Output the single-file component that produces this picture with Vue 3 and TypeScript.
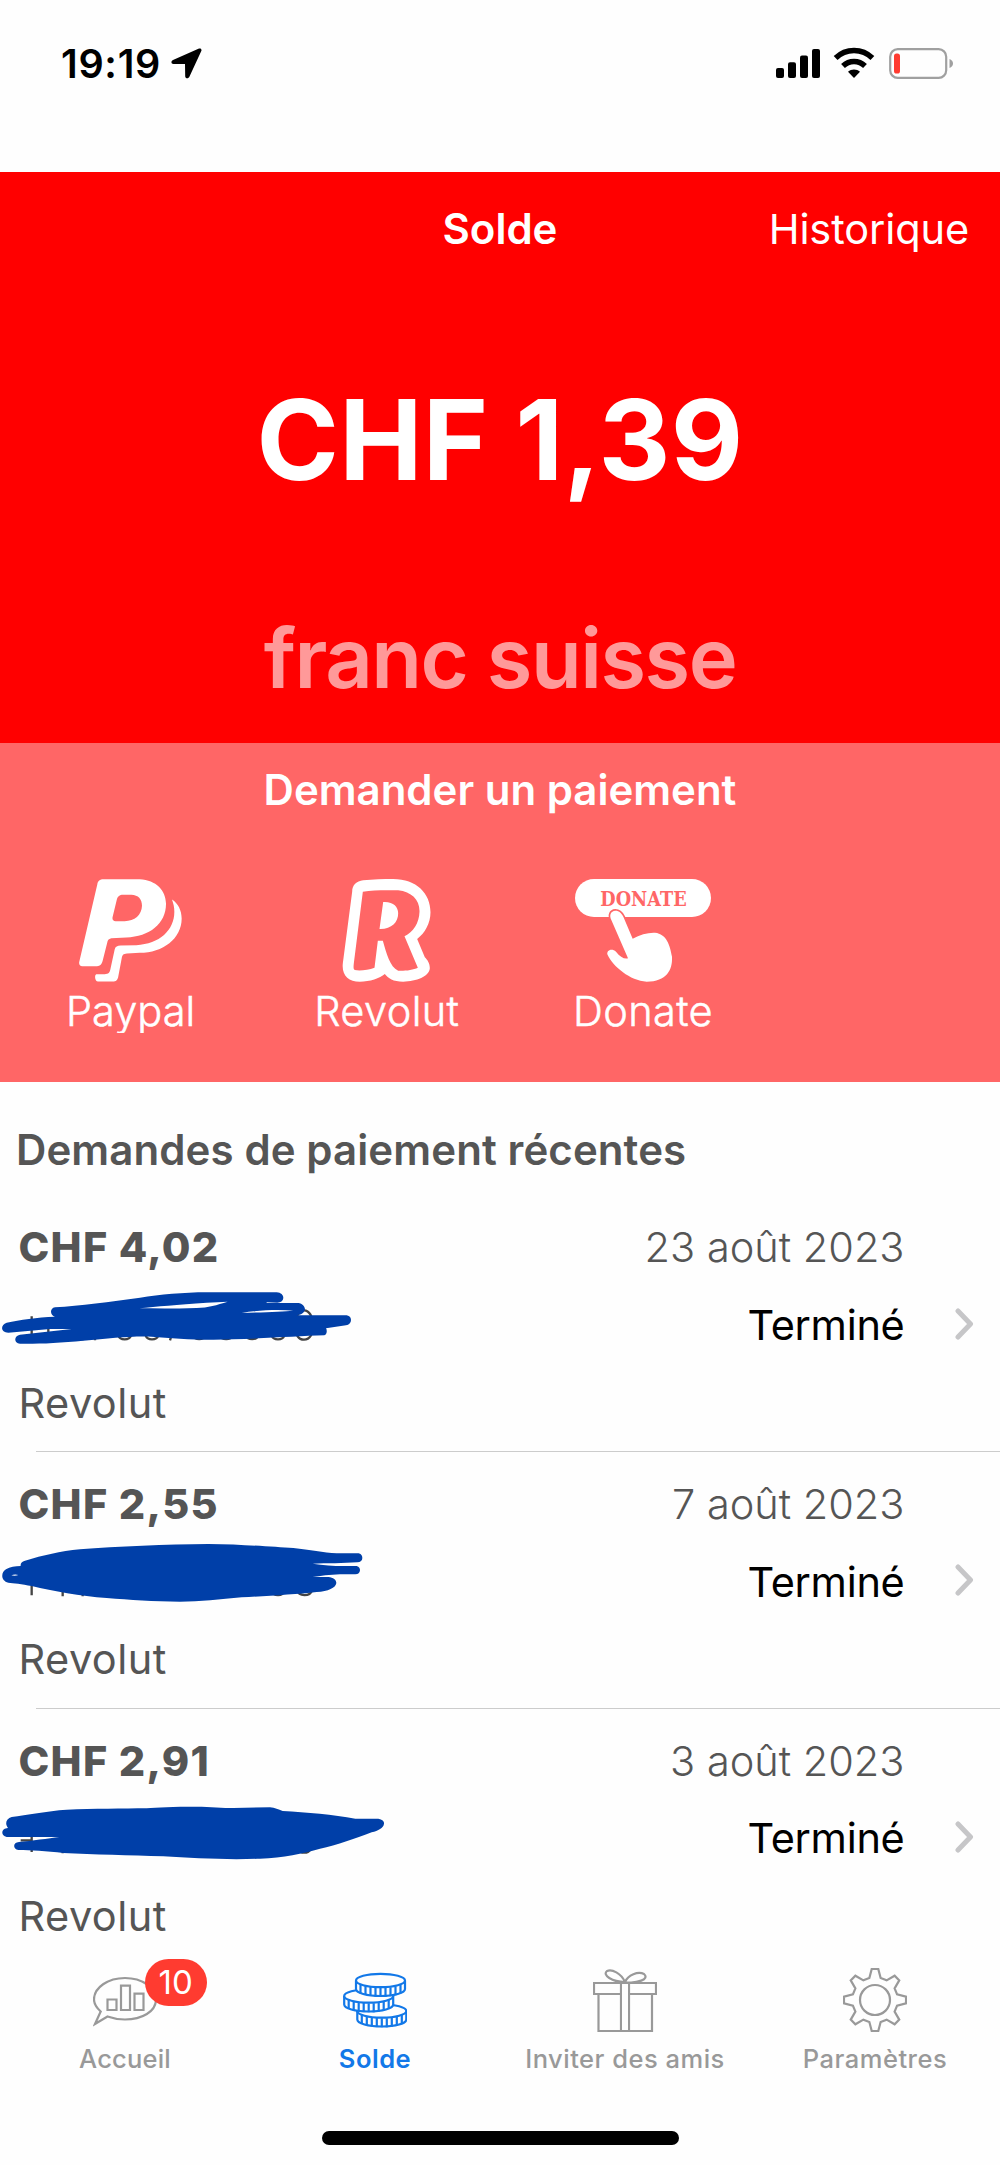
<script setup lang="ts">
interface PaymentRequest {
  amount: string
  date: string
  status: string
  method: string
  markerOrigin: number
  marker: string
  traces: string
}

interface Tab {
  id: string
  label: string
  badge?: number
}

const requests: PaymentRequest[] = [
  {
    amount: 'CHF 4,02',
    date: '23 août 2023',
    status: 'Terminé',
    method: 'Revolut',
    markerOrigin: 518,
    marker:
      'M165 591C240 586 330 574 420 562C480 553 550 546 620 546L830 546C843 547 850 554 850 563C849 572 842 577 832 577L800 576L800 578L895 578C907 580 915 588 915 597C913 607 905 614 892 614L890 615L1040 615C1050 617 1053 623 1053 629C1053 638 1047 643 1038 645L978 654C982 660 981 672 973 675C900 677 800 684 700 687C600 691 520 684 455 679C400 676 330 684 250 691C180 698 110 701 60 700C40 698 42 676 60 673L215 656L150 656L25 667C2 667 0 644 20 637C60 629 110 621 165 619C150 616 148 594 165 591Z M418 594C470 588 530 584 620 577L683 574C650 584 625 592 590 593C530 596 470 592 418 594Z M725 608C770 600 830 597 880 601C850 604 800 605 725 608Z',
    traces:
      'M95 618V672M145 652V665M248 680V690M285 680V690M513 680L510 690M355 675C360 691 388 691 393 675M437 675C442 691 470 691 475 675M580 675C585 690 610 690 615 675M660 675C665 690 692 690 697 675M738 675C743 690 770 690 775 675M815 675C820 691 848 691 853 675M884 645C884 625 896 600 912 600S939 620 939 645 930 688 912 688 886 672 884 645Z',
  },
  {
    amount: 'CHF 2,55',
    date: '7 août 2023',
    status: 'Terminé',
    method: 'Revolut',
    markerOrigin: 238,
    marker:
      'M75 303C130 287 180 275 240 269C350 260 500 254 625 253C730 254 820 262 880 265C930 270 970 279 1010 281L1076 281C1085 284 1087 289 1087 295C1087 303 1082 307 1072 308C1030 311 980 311 938 312C970 316 1000 319 1030 319L1070 319C1078 321 1080 326 1080 332C1079 340 1075 344 1066 344L1020 344C990 345 960 349 938 352L985 352C1000 353 1009 361 1009 370C1007 385 985 395 950 397C890 404 800 409 725 413C660 419 600 426 540 426C460 425 390 421 320 415C240 409 160 395 95 379C65 373 40 370 25 369C2 364 2 338 18 329C30 321 45 320 62 319C61 310 65 306 75 303Z M34 347C40 344 48 343 55 346C49 349 40 349 34 347Z',
    traces: 'M95 370V407M188 385V410M248 390V410M815 392C820 411 848 411 853 392M892 392C896 411 930 411 936 392',
  },
  {
    amount: 'CHF 2,91',
    date: '3 août 2023',
    status: 'Terminé',
    method: 'Revolut',
    markerOrigin: 228,
    marker:
      'M35 291C80 285 140 273 200 269C280 266 370 266 440 265C470 262 520 260 590 260C630 260 670 264 700 264L810 262C825 263 835 269 848 273C920 277 1000 284 1066 296L1135 296C1148 298 1153 304 1152 311C1150 325 1135 331 1115 337C1070 354 1010 376 960 386C910 400 850 413 780 416C690 420 580 415 490 409C390 406 280 403 190 399C140 393 90 391 55 390C38 387 38 367 57 366C95 363 145 355 178 351L20 351C3 349 2 327 20 325L24 324C14 312 18 296 35 291Z',
    traces: 'M62 361H98M95 348V396M188 385V400M895 388C902 401 924 401 931 388',
  },
]

const tabs: Tab[] = [
  { id: 'home', label: 'Accueil', badge: 10 },
  { id: 'wallet', label: 'Solde' },
  { id: 'invite', label: 'Inviter des amis' },
  { id: 'settings', label: 'Paramètres' },
]

// Stacked from the bottom coin up: left edge and vertical centre of the face
const coins = [
  { x: 14.3, y: 43 },
  { x: 1.2, y: 28 },
  { x: 13, y: 12.5 },
]

// Outline of the eight-toothed settings wheel
const gearPoints = Array.from({ length: 8 }, (_, i) => {
  const base = (i * Math.PI) / 4
  return [[-0.25, 22.8], [-0.105, 31.2], [0.105, 31.2], [0.25, 22.8]]
    .map(([a, r]) => `${(32 + r * Math.sin(base + a)).toFixed(2)},${(32 - r * Math.cos(base + a)).toFixed(2)}`)
    .join(' ')
}).join(' ')
</script>

<template>
  <div class="screen">
    <header class="status">
      <div class="status-left">
        <span class="clock">19:19</span>
        <svg class="locate" viewBox="0 0 31 31" width="31" height="31">
          <path d="M28 .6 2 12.1C-.4 13.2.2 15.9 2.4 15.9L14 16 14.2 28.2C14.3 30.7 17.3 31 18.4 28.8L30.3 3.1C31 1.3 29.7 0 28 .6Z" />
        </svg>
      </div>
      <div class="status-right">
        <svg viewBox="0 0 44 29" width="44" height="29">
          <rect x="0" y="19" width="8" height="10" rx="2" />
          <rect x="12" y="13.3" width="8" height="15.7" rx="2" />
          <rect x="24" y="6.6" width="8" height="22.4" rx="2" />
          <rect x="36" y="0" width="8" height="29" rx="2" />
        </svg>
        <svg class="wifi" viewBox="0 0 42 31" width="42" height="31">
          <path d="M2.6 11C12.8.9 29.2.9 39.4 11M10 19C16.2 12.9 25.8 12.9 32 19" fill="none" stroke="#000" stroke-width="5.4" />
          <path d="M21 31 15 24.8C18.4 21.6 23.6 21.6 27 24.8Z" />
        </svg>
        <svg class="battery" viewBox="0 0 65 31" width="65" height="31">
          <rect x="1.2" y="1.2" width="56" height="28.6" rx="7.5" fill="none" stroke="#a0a0a0" stroke-width="2.2" />
          <rect x="5" y="5.5" width="6" height="20" rx="2.6" fill="#ff3b30" />
          <path d="M60.5 11C62.6 11.7 64 13.4 64 15.5S62.6 19.3 60.5 20Z" fill="#a0a0a0" />
        </svg>
      </div>
    </header>

    <section class="balance">
      <nav class="nav">
        <span></span>
        <h1>Solde</h1>
        <a class="history">Historique</a>
      </nav>
      <div class="total">CHF 1,39</div>
      <div class="currency">franc suisse</div>
    </section>

    <section class="ask">
      <h2>Demander un paiement</h2>
      <div class="methods">
        <div class="method">
          <svg viewBox="118 417 309 308" width="103" height="103">
            <path fill="#fff" fill-rule="evenodd" d="M192 417L300 417C350 420 378 450 379 490C380 550 330 590 260 592L215 594C206 596 204 600 203 606L189 662C186 672 182 678 172 678L128 678C120 678 117 672 119 664L173 432C175 422 180 417 192 417ZM250 464L275 464C296 465 307 477 307 497C306 525 285 543 255 543L228 543C220 543 217 538 219 530L231 480C234 468 240 464 250 464Z" />
            <path fill="#fff" d="M397 478C415 490 426 510 426 535C426 595 370 638 300 638L262 640C250 641 248 645 246 655L236 708C234 720 228 724 220 724L175 724C165 724 164 703 170 702L195 702C207 702 210 697 212 688L225 628C227 619 233 616 243 616L290 615C360 612 404 570 404 515C404 500 401 490 397 478Z" />
          </svg>
          <span class="clip">Paypal</span>
        </div>
        <div class="method">
          <svg viewBox="907 417 266 309" width="89" height="103">
            <path fill="#fff" fill-rule="evenodd" d="M1060 417C1130 417 1172 460 1172 517C1172 550 1155 580 1132 597L1155 652C1163 660 1170 670 1170 685C1168 710 1130 724 1090 725C1060 725 1045 715 1035 702C1020 715 990 725 960 725C925 725 905 705 909 670L937 455C937 435 950 424 970 421C1000 418 1030 417 1060 417ZM969 455C1000 450 1040 450 1075 451C1115 455 1140 480 1139 515C1138 550 1120 575 1094 589L1134 683C1120 690 1095 693 1075 692C1050 680 1040 640 1029 602L1014 602 1004 683C985 690 960 693 945 690C940 688 941 680 942 670ZM1030 486C1060 484 1075 500 1075 520C1075 548 1055 568 1019 567Z" />
          </svg>
          <span>Revolut</span>
        </div>
        <div class="method">
          <svg viewBox="315 417 408 309" width="136" height="103">
            <rect x="315" y="417" width="408" height="114" rx="57" fill="#fff" />
            <text x="391" y="497" textLength="259" lengthAdjust="spacingAndGlyphs" class="donate">DONATE</text>
            <path fill="#fff" stroke="#f66" stroke-width="10" paint-order="stroke" d="M436 512C448 512 455 520 460 530L488 596C510 583 535 577 555 578C590 582 600 615 606 650C608 690 590 724 530 725C480 722 430 680 413 645C407 632 425 622 438 635C450 650 462 658 474 655L424 540C417 525 422 513 436 512Z" />
          </svg>
          <span>Donate</span>
        </div>
      </div>
    </section>

    <section class="recent">
      <h2>Demandes de paiement récentes</h2>
      <article v-for="r in requests" :key="r.date" class="request">
        <div class="line">
          <strong>{{ r.amount }}</strong>
          <time>{{ r.date }}</time>
        </div>
        <div class="line">
          <span></span>
          <span class="state">{{ r.status }}</span>
        </div>
        <div class="line">
          <span class="via">{{ r.method }}</span>
        </div>
        <svg class="chevron" viewBox="0 0 19 32" width="19" height="32">
          <path d="M3 3 15.5 16 3 29" fill="none" stroke="#c6c6c8" stroke-width="5" stroke-linecap="round" stroke-linejoin="round" />
        </svg>
        <svg class="marker" :viewBox="`0 ${r.markerOrigin} 1200 210`" width="400" height="70">
          <path :d="r.traces" fill="none" stroke="#444" stroke-width="7" />
          <path :d="r.marker" fill="#003fa8" fill-rule="evenodd" />
        </svg>
      </article>
    </section>

    <footer class="tabs">
      <div class="tab-row">
        <div v-for="t in tabs" :key="t.id" class="tab" :class="{ active: t.id === 'wallet' }">
          <div class="icon">
            <svg v-if="t.id === 'home'" viewBox="0 0 64 64" width="64" height="64">
              <path d="M2 56 7.7 43.5C3.5 39.7 1 35.5 1 31.5 1 19.5 15 10 32 10S63 19.5 63 31.5 49 51.5 32 51.5C25.5 51.5 20 50.5 14.5 48.5Z" />
              <path d="M14.5 31.5H23.5V42H14.5ZM28 17.7H37V42H28ZM41.5 25.7H50.5V42H41.5Z" />
            </svg>
            <svg v-else-if="t.id === 'wallet'" viewBox="0 0 64 64" width="64" height="64">
              <g v-for="c in coins" :key="c.y">
                <path :d="`M${c.x} ${c.y}v8.5c0 4 11 7 24.5 7s24.5-3 24.5-7v-8.5`" fill="#fefefe" />
                <ellipse :cx="c.x + 24.5" :cy="c.y" rx="24.5" ry="6.7" fill="#fefefe" />
                <path :d="`M${c.x + 4.5} ${c.y + 4}v9m5-7.5v9m5-8v9m5-8.5v9m5-8.7v9m5-9v9m5-9.5v9m5-10v9m5-11v9`" />
              </g>
            </svg>
            <svg v-else-if="t.id === 'invite'" viewBox="0 0 64 64" width="64" height="64">
              <path d="M1 15H63V26H1ZM5.5 26V63H59V26M28 15V63M36 15V63M32 14C28 5 19 1 14 3C9 7 19 14 32 14ZM32 14C35 7 45 3 51 6C57 11 44 16 32 14Z" />
              <path d="M29 16.1H35V61.9H29Z" fill="#fefefe" stroke="none" />
            </svg>
            <svg v-else viewBox="0 0 64 64" width="64" height="64">
              <polygon :points="gearPoints" />
              <circle cx="32" cy="32" r="15" />
            </svg>
            <span v-if="t.badge" class="badge">{{ t.badge }}</span>
          </div>
          <span class="label">{{ t.label }}</span>
        </div>
      </div>
      <div class="home-bar"></div>
    </footer>
  </div>
</template>

<style>
html,
body {
  margin: 0;
  background: #fefefe;
}
</style>

<style scoped>
.screen {
  width: 1000px;
  height: 2165px;
  overflow: hidden;
  display: flex;
  flex-direction: column;
  background: #fefefe;
  font-family: Inter, "Liberation Sans", sans-serif;
  font-size: 41.5px;
}
svg { display: block; flex: none; }
h1, h2 { margin: 0; font-size: 42px; font-weight: 600; }

.status {
  height: 172px;
  flex: none;
  display: flex;
  justify-content: space-between;
  align-items: flex-start;
  box-sizing: border-box;
  padding: 38.5px 46px 0 61px;
}
.status-left { display: flex; height: 50px; align-items: center; }
.clock { font-size: 39.5px; font-weight: 600; letter-spacing: 0.7px; line-height: 50px; }
.locate { margin-left: 9.5px; }
.status-right { display: flex; height: 50px; align-items: center; }
.wifi { margin-left: 13.5px; margin-top: -3px; }
.battery { margin-left: 14px; }

.balance { height: 571px; flex: none; background: #f00; color: #fff; text-align: center; }
.nav {
  height: 113px;
  display: grid;
  grid-template-columns: 1fr auto 1fr;
  align-items: center;
  padding: 0 31px;
}
.nav h1 { line-height: 112px; }
.history { text-align: right; font-weight: 400; letter-spacing: -0.1px; line-height: 112px; }
.total { font-size: 111.5px; font-weight: 700; letter-spacing: 0.3px; line-height: 200px; margin-top: 55px; }
.currency { font-size: 83px; font-weight: 600; letter-spacing: -1.5px; line-height: 120px; margin-top: 58px; color: #f99; }

.ask { height: 339px; flex: none; background: #f66; color: #fff; }
.ask h2 { text-align: center; height: 96px; line-height: 94px; }
.methods { display: flex; padding: 40px 0 0 2.5px; }
.method { width: 256.2px; display: flex; flex-direction: column; align-items: center; }
.method span {
  height: 49px;
  margin-top: 2px;
  line-height: 55px;
  font-weight: 300;
  letter-spacing: 0.4px;
  -webkit-text-stroke: 0.5px #fff;
}
.method .clip { overflow: hidden; letter-spacing: 0; }
.donate { font-family: "DejaVu Serif", serif; font-weight: 700; font-size: 60px; fill: #f66; }

.recent { height: 868px; flex: none; overflow: hidden; color: #555; }
.recent h2 { height: 83.6px; padding: 29px 16px 0; line-height: 78px; letter-spacing: 0.1px; }
.request { position: relative; height: 256.7px; box-sizing: border-box; padding: 13.8px 95.5px 0 18.5px; }
.request:not(:last-child)::after {
  content: "";
  position: absolute;
  left: 36px;
  right: 0;
  bottom: -1px;
  height: 1.4px;
  background: #ccc;
}
.line { display: flex; justify-content: space-between; line-height: 78px; }
.line:nth-child(n + 2) { margin-top: -0.3px; }
.line strong { font-weight: 800; letter-spacing: 1.25px; }
.line time { font-weight: 300; }
.state { color: #000; letter-spacing: -0.3px; }
.via { letter-spacing: 0.45px; }
.chevron { position: absolute; right: 26.5px; top: 113px; }
.marker { position: absolute; left: 0; top: 88px; }

.tabs { flex: 1; display: flex; flex-direction: column; align-items: center; background: #fefefe; }
.tab-row { display: flex; width: 100%; height: 181px; }
.tab { width: 250px; display: flex; flex-direction: column; align-items: center; padding-top: 18px; color: #999; }
.tab.active { color: #1278e8; }
.icon { position: relative; width: 64px; height: 64px; }
.icon svg { fill: none; stroke: currentColor; stroke-width: 2.2; }
.badge {
  position: absolute;
  left: 51.7px;
  top: -8.7px;
  width: 62px;
  height: 46.5px;
  border-radius: 24px;
  background: #ff3b30;
  color: #fff;
  font-size: 33px;
  line-height: 46px;
  text-align: center;
}
.label { font-size: 25.5px; font-weight: 500; letter-spacing: 0.5px; line-height: 30px; margin-top: 11.5px; white-space: nowrap; }
.tab:first-child .label { letter-spacing: 0.2px; }
.tab.active .label { font-weight: 600; }
.home-bar { width: 357px; height: 13.5px; border-radius: 7px; background: #000; }
</style>
